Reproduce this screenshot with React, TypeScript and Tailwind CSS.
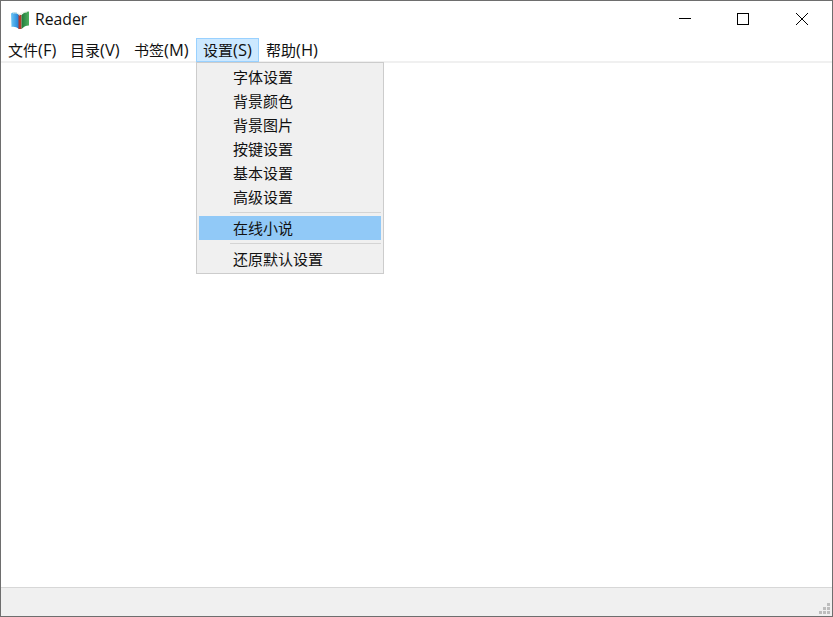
const font = { fontFamily: '"Open Sans", "Noto Sans CJK SC", sans-serif' };

const menus = [
  { name: '文件', key: '(F)', cls: 'w-[62px] pl-[7px]' },
  { name: '目录', key: '(V)', cls: 'w-[64px] pl-[7px]' },
  { name: '书签', key: '(M)', cls: 'w-[69px] pl-[7px]' },
];

function Label({ name, hot }: { name: string; hot: string }) {
  return (
    <span className="whitespace-nowrap">
      {name}
      <span className="text-[16.5px]">{hot}</span>
    </span>
  );
}

function Item({ label, active }: { label: string; active?: boolean }) {
  return (
    <div className={`h-6 flex items-center pl-[34px] text-[15px] text-[#111] ${active ? 'bg-[#91c9f7]' : ''}`}>
      {label}
    </div>
  );
}

function Sep() {
  return <div className="h-px ml-[31px] my-[3px] bg-[#d4d4d4]" />;
}

export default function App() {
  return (
    <div
      className="w-[833px] h-[617px] bg-white border border-[#6e6e6e] flex flex-col relative overflow-hidden"
      style={font}
    >
      <div className="h-[37px] flex items-center shrink-0">
        <svg width="20" height="20" viewBox="0 0 20 20" className="ml-[9px]">
          <defs>
            <linearGradient id="bl" x1="0" y1="0" x2="1" y2="0">
              <stop offset="0" stopColor="#6cc6f5" />
              <stop offset="1" stopColor="#1f7fd6" />
            </linearGradient>
            <linearGradient id="gr" x1="0" y1="0" x2="1" y2="0">
              <stop offset="0" stopColor="#1f7a3a" />
              <stop offset="1" stopColor="#4fb060" />
            </linearGradient>
          </defs>
          <path d="M1 3.5 C4 1.5 6.5 2 9 4.5 V19 C6.5 17 4 16.5 1.5 17 Z" fill="url(#bl)" />
          <path d="M8.5 4.5 L11.5 5 V19 L8.5 19 Z" fill="#b5392c" />
          <path d="M11.5 5 C14 2.5 16 1.5 19 1.5 V15.5 C16 15.5 14 16.5 11.5 19 Z" fill="url(#gr)" />
          <path d="M3 3 C5.5 2.5 7.5 3 9.5 5 C11 3 14 2 17 2" fill="none" stroke="#e8f3e4" strokeWidth="1" />
        </svg>
        <span className="ml-[5px] text-[15.75px] text-[#111]">Reader</span>
        <div className="ml-auto flex items-center text-black">
          <div className="w-[59px] h-[37px] pb-px flex items-center justify-center">
            <svg width="12" height="12" viewBox="0 0 12 12"><path d="M0 5.5H12" stroke="#000" strokeWidth="1" /></svg>
          </div>
          <div className="w-[58px] h-[37px] pb-px flex items-center justify-center">
            <svg width="12" height="12" viewBox="0 0 12 12"><rect x="0.5" y="0.5" width="11" height="11" fill="none" stroke="#000" /></svg>
          </div>
          <div className="w-[60px] h-[37px] pb-px flex items-center justify-center">
            <svg width="12" height="12" viewBox="0 0 12 12"><path d="M0 0L12 12M12 0L0 12" stroke="#000" strokeWidth="1" /></svg>
          </div>
        </div>
      </div>

      <div className="h-[23px] flex items-start shrink-0 text-[15px] text-[#111]">
        {menus.map((m) => (
          <div key={m.name} className={`${m.cls} h-[24px] flex items-center`}><Label name={m.name} hot={m.key} /></div>
        ))}
        <div className="w-[63px] h-[24px] relative z-10 flex items-center pl-[6px] bg-[#cce8ff] border border-[#99d1ff]"><Label name="设置" hot="(S)" /></div>
        <div className="pl-[7px] h-[24px] flex items-center"><Label name="帮助" hot="(H)" /></div>
      </div>
      <div className="h-[2px] bg-[#f0f0f0] shrink-0" />

      <div className="flex-1" />

      <div className="h-[29px] shrink-0 bg-[#f0f0f0] border-t border-[#d7d7d7] relative">
        <svg width="12" height="12" viewBox="0 0 12 12" className="absolute right-[1px] bottom-[1px]" fill="#bdbdbd">
          <rect x="8" y="0" width="3" height="3" />
          <rect x="4" y="4" width="3" height="3" />
          <rect x="8" y="4" width="3" height="3" />
          <rect x="0" y="8" width="3" height="3" />
          <rect x="4" y="8" width="3" height="3" />
          <rect x="8" y="8" width="3" height="3" />
        </svg>
      </div>

      <div className="absolute left-[195px] top-[61px] w-[188px] h-[212px] bg-[#f0f0f0] border border-[#cccccc] p-[2px] z-20">
        <Item label="字体设置" />
        <Item label="背景颜色" />
        <Item label="背景图片" />
        <Item label="按键设置" />
        <Item label="基本设置" />
        <Item label="高级设置" />
        <Sep />
        <Item label="在线小说" active />
        <Sep />
        <Item label="还原默认设置" />
      </div>
    </div>
  );
}
